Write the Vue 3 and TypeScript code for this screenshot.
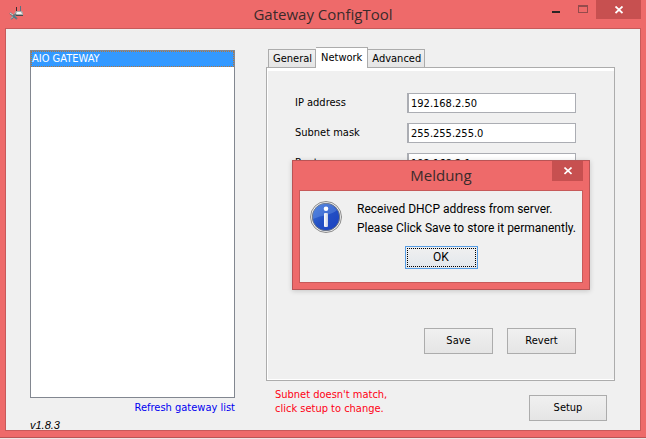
<script setup lang="ts">
import { ref } from 'vue'

interface Field {
  id: string
  label: string
  value: string
}

const gateways = ['AIO GATEWAY']
const selected = ref(0)
const tabs = ['General', 'Network', 'Advanced']
const activeTab = ref('Network')
const fields = ref<Field[]>([
  { id: 'ip', label: 'IP address', value: '192.168.2.50' },
  { id: 'mask', label: 'Subnet mask', value: '255.255.255.0' },
  { id: 'router', label: 'Router', value: '192.168.2.1' },
])
const dialogOpen = ref(true)
</script>

<template>
  <div class="window">
    <header class="titlebar">
      <svg class="app-icon" viewBox="0 0 16 16" aria-hidden="true">
        <path d="M7.500 2v4" stroke="#3c2c30" />
        <path d="M11.500 1v5" stroke="#5a7180" />
        <path d="M5 9l2-3h6l1 2v3H6z" fill="#a9abab" />
        <path d="M8 7h4l1 2H7z" fill="#f1f1ef" />
        <path d="M7 10.500h7" stroke="#444a4c" />
        <path d="M1 8l7 6M2 14l5-5" stroke="#69777c" stroke-width="2" />
        <path d="M1 8l3 2M2 13.500l2-2" stroke="#d0d5d5" />
        <path d="M4 11l3 2" stroke="#3f7f98" />
      </svg>
      <h1>Gateway ConfigTool</h1>
      <div class="controls">
        <button class="ctl" aria-label="Minimize">
          <svg viewBox="0 0 10 10" shape-rendering="crispEdges"><path d="M1 6h8v2H1z" fill="#2b2525" /></svg>
        </button>
        <button class="ctl" aria-label="Maximize" disabled>
          <svg viewBox="0 0 10 10" shape-rendering="crispEdges"><path d="M0 0h10v8H0zM1 2v5h8V2z" fill="#944b4c" fill-rule="evenodd" /></svg>
        </button>
        <button class="ctl close" aria-label="Close">
          <svg viewBox="0 0 8 8"><path d="M.5.5l7 6.500M7.500.5l-7 6.500" stroke="#fff" stroke-width="1.800" /></svg>
        </button>
      </div>
    </header>

    <main class="client">
      <section class="side">
        <ul class="list" role="listbox" aria-label="Gateways">
          <li
            v-for="(g, i) in gateways"
            :key="g"
            role="option"
            :aria-selected="i === selected"
            :class="{ selected: i === selected }"
            @click="selected = i"
          >{{ g }}</li>
        </ul>
        <a class="refresh" href="#">Refresh gateway list</a>
        <p class="version">v1.8.3</p>
      </section>

      <section class="config">
        <div class="tabs" role="tablist">
          <button
            v-for="t in tabs"
            :key="t"
            role="tab"
            class="tab"
            :class="{ active: t === activeTab }"
            :aria-selected="t === activeTab"
            @click="activeTab = t"
          >{{ t }}</button>
        </div>
        <form class="panel" @submit.prevent>
          <div v-for="f in fields" :key="f.id" class="row">
            <label :for="f.id">{{ f.label }}</label>
            <input :id="f.id" v-model="f.value" type="text" />
          </div>
          <div class="actions">
            <button class="btn" type="submit">Save</button>
            <button class="btn" type="reset">Revert</button>
          </div>
        </form>
        <footer class="status">
          <p class="warning">Subnet doesn't match,<br />click setup to change.</p>
          <button class="btn setup">Setup</button>
        </footer>
      </section>
    </main>

    <div v-if="dialogOpen" class="dialog" role="dialog" aria-labelledby="dialog-title">
      <header class="dialog-title">
        <h2 id="dialog-title">Meldung</h2>
        <button class="dialog-close" aria-label="Close dialog" @click="dialogOpen = false">
          <svg viewBox="0 0 8 8"><path d="M.5.5l7 6.500M7.500.5l-7 6.500" stroke="#fff" stroke-width="1.600" /></svg>
        </button>
      </header>
      <div class="dialog-body">
        <div class="message">
          <svg class="info" viewBox="0 0 32 32" aria-hidden="true">
            <defs>
              <linearGradient id="blue" x1="0" y1="0" x2="1" y2="1">
                <stop offset="0" stop-color="#3f78dc" />
                <stop offset="0.500" stop-color="#2350c4" />
                <stop offset="1" stop-color="#1a3fc0" />
              </linearGradient>
              <linearGradient id="stem" x1="0" y1="0" x2="1" y2="0">
                <stop offset="0" stop-color="#fff" />
                <stop offset="1" stop-color="#c9cfe2" />
              </linearGradient>
            </defs>
            <circle cx="16" cy="16" r="15.500" fill="#f2f2f2" stroke="#8b8b8b" />
            <circle cx="16" cy="16" r="13.700" fill="url(#blue)" stroke="#6d7686" />
            <path d="M3 18A13 13 0 0 1 27 9C22 14 12 14 3 18z" fill="#7ba5ee" opacity="0.350" />
            <circle cx="16" cy="7.800" r="2.300" fill="#fff" />
            <rect x="14" y="12" width="4" height="14" rx="1" fill="url(#stem)" />
          </svg>
          <p>Received DHCP address from server.<br />Please Click Save to store it permanently.</p>
        </div>
        <button class="ok" @click="dialogOpen = false"><span>OK</span></button>
      </div>
    </div>
  </div>
</template>

<style>
body {
  background: #f0e4e4;
}
</style>

<style scoped>
* {
  box-sizing: border-box;
}
h1, h2, p, ul {
  margin: 0;
  padding: 0;
  font-weight: 400;
}
button {
  font: inherit;
  color: inherit;
}
.window {
  position: relative;
  display: flex;
  flex-direction: column;
  min-height: calc(100vh - 1px);
  padding: 0 5px 6px;
  background: #ee6a6a;
  border-bottom: 1px solid #b95455;
  font: 11px/14px "DejaVu Sans Condensed", "Liberation Sans", sans-serif;
  color: #000;
}
.titlebar {
  display: grid;
  grid-template-columns: 100px 1fr 100px;
  height: 28px;
}
.app-icon {
  width: 16px;
  height: 16px;
  margin: 5px 0 0 4px;
}
h1 {
  text-align: center;
  font: 15px/28px "Open Sans", sans-serif;
  color: #3a2a2b;
}
.controls {
  display: flex;
  justify-content: flex-end;
  align-items: flex-start;
}
.ctl {
  width: 27px;
  height: 19px;
  padding: 0;
  border: 0;
  background: none;
  display: flex;
  align-items: center;
  justify-content: center;
}
.ctl svg {
  width: 10px;
  height: 10px;
}
.ctl.close {
  width: 45px;
  background: #c75050;
}
.ctl.close svg,
.dialog-close svg {
  width: 8px;
  height: 8px;
}
.client {
  flex: 1;
  display: grid;
  grid-template-columns: 205px minmax(0, 1fr);
  column-gap: 31px;
  padding: 18px 25px 0 24px;
  border: 1px solid #c75a5a;
  background: #f0f0f0;
}
.side {
  display: flex;
  flex-direction: column;
  padding-top: 3px;
}
.list {
  flex: 1;
  list-style: none;
  border: 1px solid #828790;
  background: #fff;
}
.list li {
  padding: 1px 0 0 1px;
  line-height: 15px;
}
.list .selected {
  border: 1px dotted #b5763a;
  padding: 0;
  background: #3399ff;
  color: #fff;
  line-height: 14px;
}
.refresh {
  align-self: flex-end;
  margin-top: 3px;
  color: #0000f0;
  text-decoration: none;
}
.version {
  margin-top: 3px;
  height: 12px;
  font: italic 11px/14px "Liberation Sans", sans-serif;
}
.config {
  display: flex;
  flex-direction: column;
}
.tabs {
  display: flex;
  align-items: flex-end;
  padding-left: 2px;
}
.tab {
  height: 18px;
  padding: 0 3px 0 4px;
  border: 1px solid #acacac;
  border-bottom: 0;
  background: linear-gradient(#f0f0f0, #e5e5e5);
  white-space: nowrap;
}
.tab + .tab {
  border-left: 0;
}
.tabs .active {
  position: relative;
  height: 21px;
  margin-bottom: -1px;
  padding: 0 5px;
  background: #fff;
}
.panel {
  flex: 1;
  display: flex;
  flex-direction: column;
  gap: 10px;
  padding: 25px 38px 26px 28px;
  border: 1px solid #acacac;
  box-shadow: inset 0 3px #fff, inset 1px -1px #fff;
}
.row {
  display: grid;
  grid-template-columns: 112px minmax(0, 1fr);
  align-items: center;
}
.row input {
  width: 100%;
  height: 20px;
  padding: 0 2px;
  border: 1px solid #abadb3;
  border-left-width: 2px;
  background: #fff;
  font: inherit;
  color: #000;
}
.actions {
  display: flex;
  justify-content: flex-end;
  gap: 14px;
  margin-top: auto;
}
.btn {
  width: 69px;
  height: 26px;
  padding: 0;
  border: 1px solid #acacac;
  background: linear-gradient(#f0f0f0, #e5e5e5);
}
.status {
  display: flex;
  justify-content: space-between;
  padding: 7px 8px 9px 9px;
}
.warning {
  color: #ff0014;
}
.setup {
  width: 78px;
  margin-top: 7px;
}
.dialog {
  position: absolute;
  left: 292px;
  top: 160px;
  width: 298px;
  padding: 0 6px 6px;
  border: 1px solid #b95455;
  background: #ee6a6a;
  box-shadow: 0 1px 5px rgba(0, 0, 0, 0.18);
}
.dialog-title {
  display: grid;
  grid-template-columns: 31px 1fr 31px;
  align-items: start;
  height: 29px;
}
h2 {
  grid-column: 2;
  text-align: center;
  font: 15px/29px "Open Sans", sans-serif;
  color: #3a2a2b;
}
.dialog-close {
  height: 20px;
  padding: 0;
  border: 0;
  background: #c75050;
  display: flex;
  align-items: center;
  justify-content: center;
}
.dialog-body {
  padding: 9px 10px 13px;
  border: 1px solid #c75a5a;
  background: #f0f0f0;
  display: flex;
  flex-direction: column;
  align-items: center;
  gap: 8px;
}
.message {
  display: flex;
  align-self: stretch;
  gap: 15px;
  font: 12px/19px Roboto, sans-serif;
  white-space: nowrap;
}
.info {
  flex: none;
  width: 32px;
  height: 32px;
  margin-top: 1px;
}
.ok {
  width: 73px;
  height: 23px;
  padding: 1px;
  border: 1px solid #569de5;
  background: linear-gradient(#f0f0f0, #e2e7ec);
  font: 12px/17px Roboto, sans-serif;
}
.ok span {
  display: block;
  border: 1px dotted #000;
}
</style>
